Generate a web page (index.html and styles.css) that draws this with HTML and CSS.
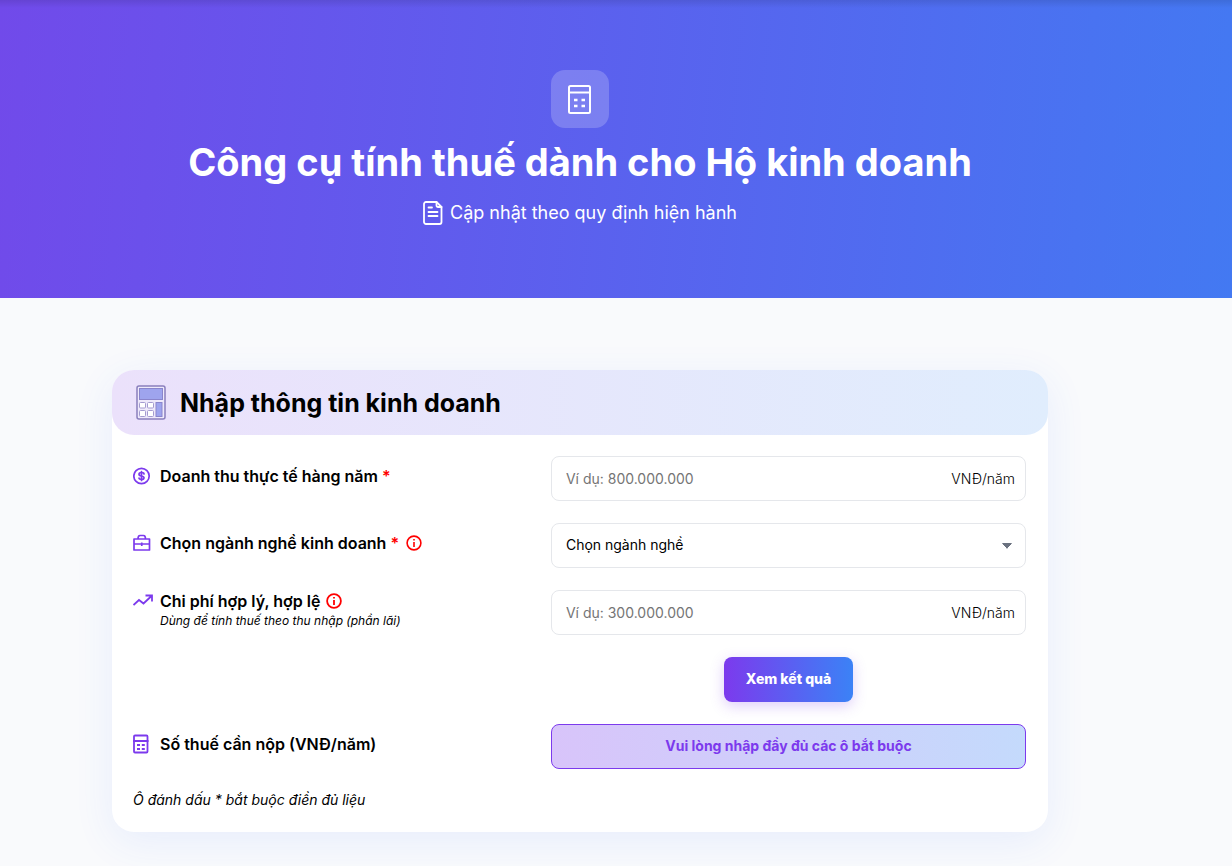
FILE: index.html
```html
<!doctype html>
<html lang="vi">
<head>
	<meta charset="utf-8">
	<meta name="viewport" content="width=device-width, initial-scale=1.0">
	<title>Công cụ tính thuế dành cho Hộ kinh doanh</title>
	<link rel="stylesheet" href="styles.css">
</head>
<body>

	<header class="hero">
		<div class="hero-icon">
			<svg width="30" height="32" viewBox="0 0 30 32" fill="none" stroke="#fff" stroke-width="2">
				<rect x="4" y="3" width="21" height="27" rx="1.5"/>
				<path d="M3 9.500h23"/>
				<path d="M9 17h3.500M16.500 17h3.500M9 23h3.500M16.500 23h3.500" stroke-width="2.500"/>
			</svg>
		</div>
		<h1>Công cụ tính thuế dành cho Hộ kinh doanh</h1>
		<p class="hero-sub">
			<svg width="20" height="24" viewBox="0 0 20 24" fill="none" stroke="#fff" stroke-width="1.8" stroke-linecap="round" stroke-linejoin="round">
				<path d="M3 1h10.500l5 5v15a2 2 0 0 1-2 2H3a2 2 0 0 1-2-2V3a2 2 0 0 1 2-2z"/>
				<path d="M13.500 1v3.500a1.500 1.500 0 0 0 1.500 1.500h3.500M5.500 6.500h3.500M5.500 11h9M5.500 15h9"/>
			</svg>
			Cập nhật theo quy định hiện hành
		</p>
	</header>

	<main class="page">
		<form class="card">
			<div class="card-head">
				<svg width="30" height="36" viewBox="0 0 30 36" fill="none" stroke="#a49bd0">
					<rect x="1" y="1" width="28" height="33" rx="2" fill="#eee9fb" stroke="#8a7fbd" stroke-width="1.500"/>
					<rect x="3.500" y="3.500" width="23" height="11" fill="#9ea4ee" stroke="#8a85cc"/>
					<rect x="3.500" y="17.500" width="6" height="5.500" rx="1" fill="#fff"/>
					<rect x="11.500" y="17.500" width="6" height="5.500" rx="1" fill="#fff"/>
					<rect x="3.500" y="25.500" width="6" height="6" rx="1" fill="#fff"/>
					<rect x="11.500" y="25.500" width="6" height="6" rx="1" fill="#fff"/>
					<rect x="20" y="17.500" width="6" height="14" fill="#9ea4ee" stroke="#8a85cc"/>
				</svg>
				<h2>Nhập thông tin kinh doanh</h2>
			</div>

			<div class="rows">
				<div class="label">
					<svg class="ico" width="20" height="20" viewBox="0 0 20 20" fill="none" stroke="currentColor" stroke-width="1.700" stroke-linecap="round">
						<circle cx="8.500" cy="10" r="7.700"/>
						<path d="M8.500 5.500v9M11 8c0-1-1-1.500-2.500-1.500S6 7.200 6 8.200s1 1.500 2.500 1.800 2.500.8 2.500 1.800-1 1.700-2.500 1.700S6 13 6 12"/>
					</svg>
					<label for="revenue">Doanh thu thực tế hàng năm <span class="req">*</span></label>
				</div>
				<div class="field">
					<input type="text" id="revenue" placeholder="Ví dụ: 800.000.000">
					<span class="unit">VNĐ/năm</span>
				</div>

				<div class="label">
					<svg class="ico" width="20" height="20" viewBox="0 0 20 20" fill="none" stroke="currentColor" stroke-width="1.700" stroke-linejoin="round">
						<path d="M1 6h15.500v11H1zM5 6C5 4 6 2.500 7 2.500h3.500c1 0 2 1.500 2 3.500M1 11h15.500M8.750 9.500v3.500"/>
					</svg>
					<label for="sector">Chọn ngành nghề kinh doanh <span class="req">*</span></label>
					<svg class="info" width="16" height="16" viewBox="0 0 16 16" fill="none" stroke="currentColor" stroke-width="1.600">
						<circle cx="8" cy="8" r="6.900"/>
						<path d="M8 7v5M8 4v1.600"/>
					</svg>
				</div>
				<select id="sector">
					<option>Chọn ngành nghề</option>
				</select>

				<div class="label label-top">
					<svg class="ico" width="20" height="20" viewBox="0 0 20 20" fill="none" stroke="currentColor" stroke-width="1.800">
						<path d="M.500 15l5.500-5 4.500 3.500L18.500 6M12.500 5.500h6.500v6"/>
					</svg>
					<div>
						<div class="line">
							<label for="cost">Chi phí hợp lý, hợp lệ</label>
							<svg class="info" width="16" height="16" viewBox="0 0 16 16" fill="none" stroke="currentColor" stroke-width="1.800">
								<circle cx="8" cy="8" r="6.900"/>
								<path d="M8 7v5M8 4v1.600"/>
							</svg>
						</div>
						<p class="hint">Dùng để tính thuế theo thu nhập (phần lãi)</p>
					</div>
				</div>
				<div class="field">
					<input type="text" id="cost" placeholder="Ví dụ: 300.000.000">
					<span class="unit">VNĐ/năm</span>
				</div>

				<button type="button" class="submit">Xem kết quả</button>

				<div class="label">
					<svg class="ico" width="20" height="20" viewBox="0 0 20 20" fill="none" stroke="currentColor" stroke-width="1.800">
						<rect x="1" y="1.500" width="13.500" height="17" rx="1"/>
						<path d="M0 7h15.500M4 11h3M8.800 11h3M4 15h3M8.800 15h3"/>
					</svg>
					<label for="result">Số thuế cần nộp (VNĐ/năm)</label>
				</div>
				<output id="result" class="result">Vui lòng nhập đầy đủ các ô bắt buộc</output>
			</div>

			<p class="note">Ô đánh dấu * bắt buộc điền đủ liệu</p>
		</form>
	</main>

</body>
</html>
```

FILE: styles.css
```css
* {box-sizing:border-box; margin:0; padding:0;}
body {background:#f9fafc; color:#000; font-family:"Inter","Liberation Sans",sans-serif; font-size:16px;}
svg {flex:none;}

.hero, .page {padding-right:72px;}

.hero {display:flex; flex-direction:column; align-items:center; padding-top:70px; padding-bottom:71px; color:#fff; background:linear-gradient(to bottom, rgba(0,0,0,0.1), rgba(0,0,0,0) 8px), linear-gradient(95deg, #714aea, #4379f2);}
.hero-icon {display:flex; align-items:center; justify-content:center; width:58px; height:58px; border-radius:14px; background:rgba(255,255,255,0.2);}
.hero h1 {margin-top:9px; font-size:38px; font-weight:700; line-height:50px;}
.hero-sub {display:flex; align-items:center; gap:7px; margin-top:12px; font-size:18px; line-height:28px;}

.page {padding-top:72px; padding-left:72px; padding-bottom:34px; padding-right:144px;}
.card {max-width:936px; margin:0 auto; border-radius:22px; background:#fff; box-shadow:0 10px 40px rgba(59,110,255,0.09);}
.card-head {display:flex; align-items:center; gap:14px; height:65px; padding:0 24px; border-radius:22px; background:linear-gradient(90deg, #ebe1fb, #e0edfd);}
.card-head h2 {font-size:25px; font-weight:700; line-height:32px;}

.rows {display:grid; grid-template-columns:5fr 6fr; gap:22px; padding:21px 22px 0 21px;}
.label {display:flex; align-items:center; gap:7px; padding-bottom:5px; font-weight:600; line-height:22px;}
.label-top {align-items:flex-start;}
.line {display:flex; align-items:center; gap:6px;}
.ico {color:#7c3aed;}
.info, .req {color:#f00;}
.hint {font-size:12px; font-style:italic; font-weight:400; line-height:18px;}

.field {display:flex; align-items:center; height:45px; border:1px solid #e5e7eb; border-radius:8px; background:#fff;}
.field input {flex:1; min-width:0; height:100%; padding:0 14px; border:0; background:none; font:400 14px "Inter",sans-serif; outline:none;}
.field input::placeholder {color:#757575;}
.unit {padding-right:10px; font-size:14px; font-weight:300;}

select {width:100%; height:45px; padding:0 14px 2px; border:1px solid #e5e7eb; border-radius:8px; color:#000; font:400 14px "Inter",sans-serif; appearance:none; background:linear-gradient(to top left, transparent 48%, #6b7280 52%) no-repeat right 13px center / 5px 6px, linear-gradient(to top right, transparent 48%, #6b7280 52%) no-repeat right 18px center / 5px 6px, #fff;}
/* arrow halves: left one fades out bottom left, right one bottom right */
select {background-image:linear-gradient(to bottom right, #6b7280 48%, transparent 52%), linear-gradient(to bottom left, #6b7280 48%, transparent 52%);}

.submit {grid-column:2; justify-self:center; height:45px; padding:0 22px 2px; border:0; border-radius:8px; color:#fff; font:800 14px "Inter",sans-serif; background:linear-gradient(90deg, #7c3aed, #3b82f6); box-shadow:0 4px 14px rgba(124,58,237,0.25);}
.result {display:flex; align-items:center; justify-content:center; height:45px; padding-bottom:3px; border:1px solid #7c3aed; border-radius:8px; color:#7c3aed; font-size:14px; font-weight:700; background:linear-gradient(90deg, #d8c4fa, #c4dafc);}
.note {padding:20px 21px 21px; font-size:14px; font-style:italic; line-height:22px;}

@media (max-width:800px) {
	.hero, .page {padding-left:16px; padding-right:16px; text-align:center;}
	.card {text-align:left;}
	.rows {grid-template-columns:1fr;}
	.submit {grid-column:1;}
}
```
